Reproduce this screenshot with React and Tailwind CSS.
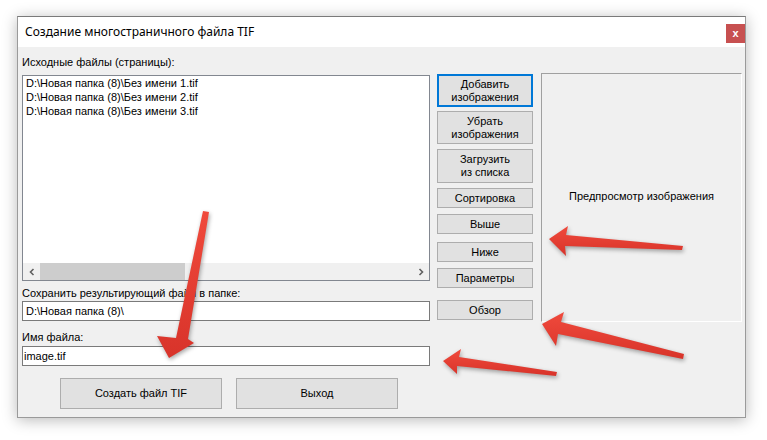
import React from "react";

const F = { fontFamily: '"Liberation Sans", Arial, sans-serif' };

function Btn({ children, className = "", primary = false }) {
  return (
    <div
      className={
        "flex flex-col items-center justify-center bg-[#e1e1e1] text-[11px] leading-[13px] text-black text-center " +
        (primary ? "border-2 border-[#0078d7] " : "border border-[#adadad] ") +
        className
      }
    >
      {children}
    </div>
  );
}

function Chevron({ dir }) {
  return (
    <svg width="8" height="8" viewBox="0 0 8 8">
      <path
        d={dir === "left" ? "M5.5 1 L2.5 4 L5.5 7" : "M2.5 1 L5.5 4 L2.5 7"}
        fill="none"
        stroke="#606060"
        strokeWidth="1.6"
      />
    </svg>
  );
}

function Arrows() {
  return (
    <svg
      className="absolute left-0 top-0 pointer-events-none drop-shadow-[1px_2px_2px_rgba(0,0,0,0.35)]"
      width="767"
      height="440"
      viewBox="0 0 767 440"
    >
      <defs>
        <linearGradient id="rg" x1="0" y1="0" x2="0" y2="1">
          <stop offset="0" stopColor="#f04a3c" />
          <stop offset="1" stopColor="#d8332a" />
        </linearGradient>
      </defs>
      <polygon
        fill="url(#rg)"
        points="203,211 209,212 188,339 194,343 169,358 157,336 176,338"
      />
      <polygon
        fill="url(#rg)"
        points="549,239 568,226 566,235 683,246 682,250 565,246 566,256"
      />
      <polygon
        fill="url(#rg)"
        points="542,324 564,312 561,322 684,354 683,359 558,334 556,346"
      />
      <polygon
        fill="url(#rg)"
        points="443,361 461,349 459,357 557,372 556,376 457,366 457,374"
      />
    </svg>
  );
}

export default function App() {
  const files = [
    "D:\\Новая папка (8)\\Без имени 1.tif",
    "D:\\Новая папка (8)\\Без имени 2.tif",
    "D:\\Новая папка (8)\\Без имени 3.tif",
  ];
  return (
    <div className="relative w-[767px] h-[440px] bg-white overflow-hidden pt-[16px] pl-[17px]" style={F}>
      <div className="w-[729px] h-[402px] border border-[#9a9a9a] border-t-[#7a7a7a] shadow-[0_2px_14px_rgba(0,0,0,0.28)] flex flex-col">
        {/* title bar */}
        <div className="h-[30px] bg-white flex items-start">
          <div
            className="pl-[7px] h-[30px] flex items-center text-[12px] text-black"
            style={{ fontFamily: '"Noto Sans", "Open Sans", sans-serif' }}
          >
            Создание многостраничного файла TIF
          </div>
          <div className="ml-auto mt-[7px] w-[19px] h-[19px] bg-[#c75050] flex items-center justify-center text-white text-[11px] font-bold leading-none">
            x
          </div>
        </div>
        {/* content */}
        <div className="flex-1 bg-[#f0f0f0] flex pl-[4px] text-black">
          {/* left column */}
          <div className="w-[408px] flex flex-col">
            <div className="mt-[9px] h-[13px] text-[11px] leading-[13px]">Исходные файлы (страницы):</div>
            <div className="mt-[6px] h-[206px] border border-[#828790] bg-white flex flex-col">
              <div className="flex-1 pl-[3px] pt-[0px] text-[11px] leading-[14px]">
                {files.map((f) => (
                  <div key={f}>{f}</div>
                ))}
              </div>
              <div className="h-[17px] bg-[#f0f0f0] flex items-stretch">
                <div className="w-[17px] flex items-center justify-center">
                  <Chevron dir="left" />
                </div>
                <div className="w-[145px] bg-[#cdcdcd]" />
                <div className="flex-1" />
                <div className="w-[17px] flex items-center justify-center">
                  <Chevron dir="right" />
                </div>
              </div>
            </div>
            <div className="mt-[6px] h-[13px] text-[11px] leading-[13px]">Сохранить результирующий файл в папке:</div>
            <div className="mt-[1px] h-[20px] border border-[#7a7a7a] bg-white pl-[3px] text-[11px] leading-[18px]">
              D:\Новая папка (8)\
            </div>
            <div className="mt-[10px] h-[13px] text-[11px] leading-[13px]">Имя файла:</div>
            <div className="mt-[2px] h-[20px] border border-[#7a7a7a] bg-white pl-[1px] text-[11px] leading-[18px]">
              image.tif
            </div>
            <div className="mt-[12px] flex gap-[14px] pl-[38px]">
              <Btn className="w-[162px] h-[31px]">Создать файл TIF</Btn>
              <Btn className="w-[162px] h-[31px]">Выход</Btn>
            </div>
          </div>
          {/* buttons column */}
          <div className="ml-[7px] w-[96px] flex flex-col">
            <Btn primary className="mt-[27px] h-[33px]">
              <span>Добавить</span>
              <span>изображения</span>
            </Btn>
            <Btn className="mt-[4px] h-[33px]">
              <span>Убрать</span>
              <span>изображения</span>
            </Btn>
            <Btn className="mt-[5px] h-[34px]">
              <span>Загрузить</span>
              <span>из списка</span>
            </Btn>
            <Btn className="mt-[5px] h-[20px]">Сортировка</Btn>
            <Btn className="mt-[6px] h-[20px]">Выше</Btn>
            <Btn className="mt-[8px] h-[20px]">Ниже</Btn>
            <Btn className="mt-[6px] h-[20px]">Параметры</Btn>
            <Btn className="mt-[12px] h-[20px]">Обзор</Btn>
          </div>
          {/* preview */}
          <div className="ml-[8px] mt-[26px] w-[201px] h-[249px] border-t border-l border-[#a0a0a0] border-b border-r border-b-white border-r-white flex items-center justify-center text-[11px] pb-[2px]">
            Предпросмотр изображения
          </div>
        </div>
      </div>
      <Arrows />
    </div>
  );
}
